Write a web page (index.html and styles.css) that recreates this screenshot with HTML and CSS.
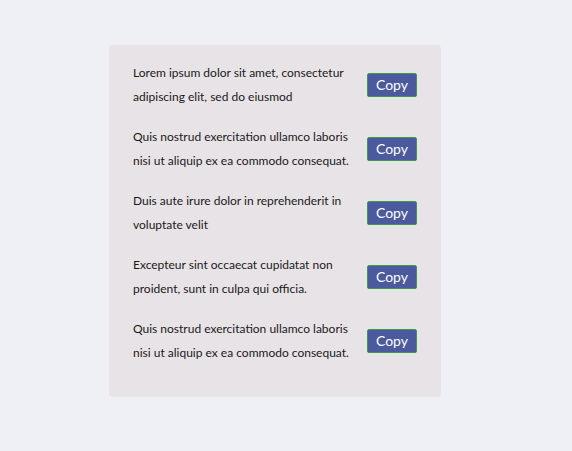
FILE: index.html
```html
<!DOCTYPE html>
<html>
<head>
<meta charset="utf-8">
<link rel="stylesheet" href="styles.css">
</head>
<body>
<div class="card">
  <div class="item">
    <p class="text">Lorem ipsum dolor sit amet, consectetur adipiscing elit, sed do eiusmod</p>
    <button class="copy">Copy</button>
  </div>
  <div class="item">
    <p class="text">Quis nostrud exercitation ullamco laboris nisi ut aliquip ex ea commodo consequat.</p>
    <button class="copy">Copy</button>
  </div>
  <div class="item">
    <p class="text">Duis aute irure dolor in reprehenderit in voluptate velit</p>
    <button class="copy">Copy</button>
  </div>
  <div class="item">
    <p class="text">Excepteur sint occaecat cupidatat non proident, sunt in culpa qui officia.</p>
    <button class="copy">Copy</button>
  </div>
  <div class="item">
    <p class="text">Quis nostrud exercitation ullamco laboris nisi ut aliquip ex ea commodo consequat.</p>
    <button class="copy">Copy</button>
  </div>
</div>
</body>
</html>
```
FILE: styles.css
```css
html, body {
  margin: 0;
  padding: 0;
  background: #eff0f5;
}
body {
  padding: 45px 0 0 109px;
  font-family: Lato, "Open Sans", sans-serif;
}
.card {
  width: 332px;
  box-sizing: border-box;
  padding: 16px 24px 32px;
  background: #e8e3e6;
  border-radius: 4px;
  display: flex;
  flex-direction: column;
  gap: 16px;
}
.item {
  display: flex;
  align-items: center;
  gap: 12px;
}
.text {
  flex: 1;
  margin: 0;
  font-size: 12px;
  line-height: 24px;
  color: #1a1a1a;
}
.copy {
  flex: none;
  width: 50px;
  height: 24px;
  padding: 0;
  background: #4b5a9c;
  border: 1px solid #3c9a4f;
  border-radius: 2px;
  color: #ffffff;
  font-family: Lato, "Open Sans", sans-serif;
  font-size: 14px;
  line-height: 22px;
}
```
